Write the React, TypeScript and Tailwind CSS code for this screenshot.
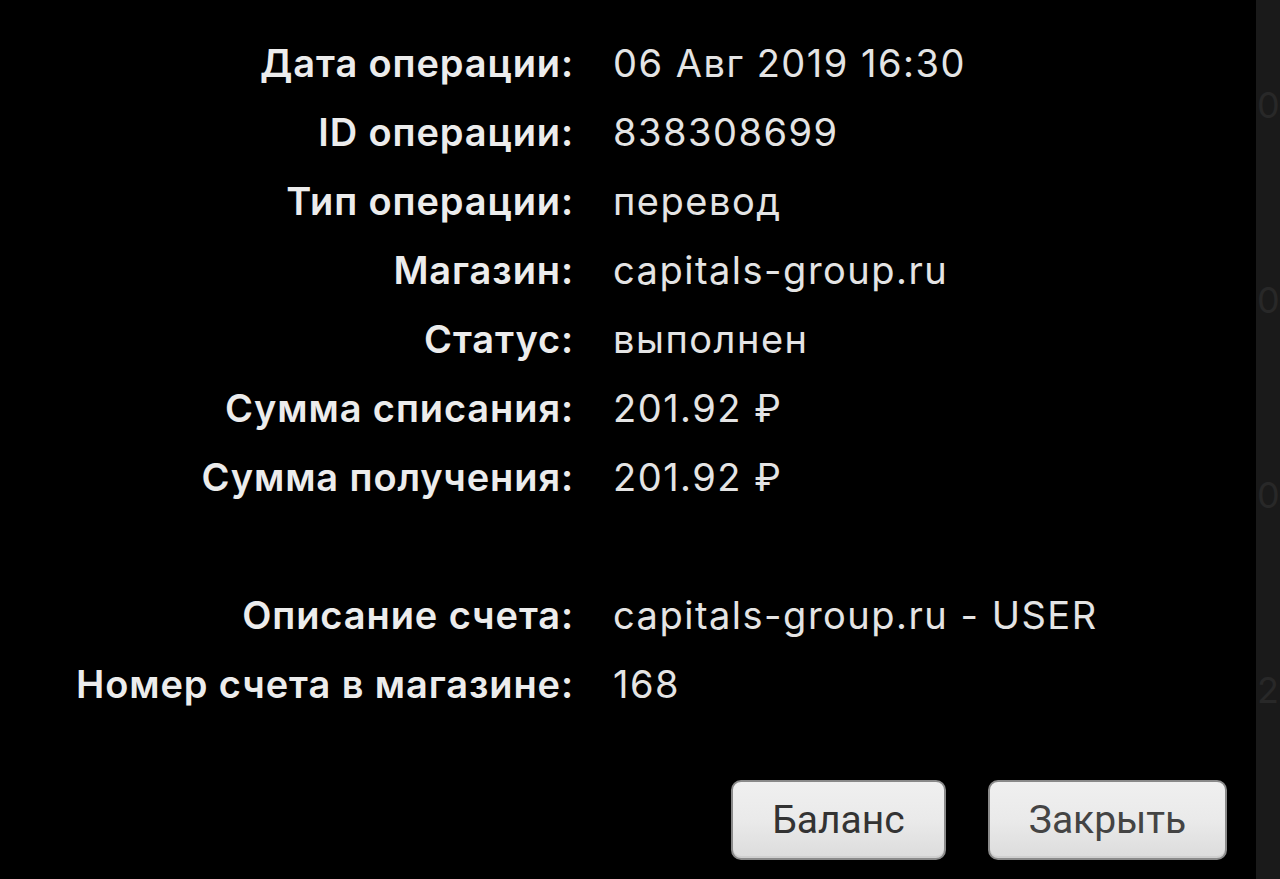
import React from "react";

const rows: [string, React.ReactNode][] = [
  ["Дата операции:", "06 Авг 2019 16:30"],
  ["ID операции:", "838308699"],
  ["Тип операции:", "перевод"],
  ["Магазин:", "capitals-group.ru"],
  ["Статус:", "выполнен"],
  ["Сумма списания:", "201.92 ₽"],
  ["Сумма получения:", "201.92 ₽"],
];

const rows2: [string, string][] = [
  ["Описание счета:", "capitals-group.ru - USER"],
  ["Номер счета в магазине:", "168"],
];

function Row({ label, value }: { label: string; value: React.ReactNode }) {
  return (
    <>
      <div className="h-[69px] flex items-center justify-end font-semibold tracking-[0.9px] text-[#ececec]">{label}</div>
      <div className="h-[69px] flex items-center tracking-[1.5px] text-[#e4e4e4]">{value}</div>
    </>
  );
}

export default function App() {
  return (
    <div className="w-[1280px] h-[879px] bg-black flex overflow-hidden">
      <div className="flex-1 flex flex-col">
        <div
          className="grid grid-cols-[574px_1fr] gap-x-[39px] pt-[28px] text-[38px] leading-none"
          style={{ fontFamily: "Inter, 'Noto Sans', sans-serif" }}
        >
          {rows.map(([l, v]) => (
            <Row key={l} label={l} value={v} />
          ))}
          <div className="h-[69px]" />
          <div className="h-[69px]" />
          {rows2.map(([l, v]) => (
            <Row key={l} label={l} value={v} />
          ))}
        </div>
        <div
          className="flex justify-end gap-[42px] pr-[29px] mt-[62px]"
          style={{ fontFamily: "Roboto, 'Noto Sans', sans-serif" }}
        >
          <button className="w-[215px] h-[80px] rounded-[10px] border-2 border-[#8a8a8a] bg-gradient-to-b from-[#f0f0f0] via-[#eaeaea] to-[#dcdcdc] text-[#333] text-[39px] shadow-[inset_0_-2px_0_#cfcfcf]">
            Баланс
          </button>
          <button className="w-[239px] h-[80px] rounded-[10px] border-2 border-[#8a8a8a] bg-gradient-to-b from-[#f0f0f0] via-[#eaeaea] to-[#dcdcdc] text-[#444] text-[39px] shadow-[inset_0_-2px_0_#cfcfcf]">
            Закрыть
          </button>
        </div>
      </div>
      <div
        className="w-[24px] bg-[#1a1a1a] flex flex-col pt-[87px] gap-[159px] overflow-hidden text-[36px] text-[#282828] leading-none"
        style={{ fontFamily: "Inter, sans-serif" }}
      >
        <span className="pl-[1px]">0</span>
        <span className="pl-[1px]">0</span>
        <span className="pl-[1px]">0</span>
        <span className="pl-[1px]">2</span>
      </div>
    </div>
  );
}
